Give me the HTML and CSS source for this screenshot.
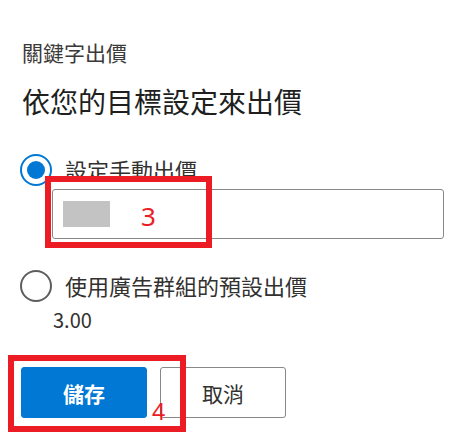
FILE: index.html
```html
<!DOCTYPE html>
<html lang="zh-Hant">
<head>
<meta charset="utf-8">
<title>關鍵字出價</title>
<link rel="stylesheet" href="styles.css">
</head>
<body>
<div class="panel">
    <div class="label">關鍵字出價</div>
    <h1 class="heading">依您的目標設定來出價</h1>

    <div class="option">
        <span class="radio radio-on"></span>
        <span class="option-text">設定手動出價</span>
    </div>
    <div class="field">
        <span class="redacted"></span>
    </div>

    <div class="option option2">
        <span class="radio"></span>
        <span class="option-text">使用廣告群組的預設出價</span>
    </div>
    <div class="amount">3.00</div>

    <div class="actions">
        <button class="button button-primary">儲存</button>
        <button class="button">取消</button>
    </div>

    <!-- annotation marks -->
    <div class="mark mark3"></div>
    <div class="mark-num num3">3</div>
    <div class="mark mark4"></div>
    <div class="mark-num num4">4</div>
</div>
</body>
</html>
```

FILE: styles.css
```css
html, body {
    margin: 0;
    background: #ffffff;
}
body {
    font-family: "Noto Sans CJK TC", "Noto Sans", sans-serif;
    color: #323130;
}
.panel {
    position: relative;
    padding: 37px 11px 0 20px;
    height: 407px;
}
.label {
    font-size: 21px;
    line-height: 30px;
    margin-left: 2px;
    color: #3b3a39;
}
.heading {
    font-size: 28px;
    font-weight: normal;
    line-height: 38px;
    margin: 15px 0 0 2px;
    color: #201f1e;
}
.option {
    display: flex;
    align-items: center;
    gap: 13px;
    margin-top: 34px;
    height: 32px;
}
.option2 {
    margin-top: 31px;
}
.option-text {
    font-size: 22px;
    line-height: 30px;
    margin-top: -3px;
}
.radio {
    box-sizing: border-box;
    width: 32px;
    height: 32px;
    border: 2px solid #605e5c;
    border-radius: 50%;
    display: flex;
    align-items: center;
    justify-content: center;
    flex: none;
}
.radio-on {
    border-color: #0078d4;
}
.radio-on::after {
    content: "";
    width: 18px;
    height: 18px;
    border-radius: 50%;
    background: #0078d4;
}
.field {
    box-sizing: border-box;
    margin: 3px 0 0 32px;
    height: 50px;
    border: 1px solid #8a8886;
    border-radius: 3px;
    display: flex;
    align-items: center;
    padding-left: 10px;
}
.redacted {
    width: 47px;
    height: 26px;
    background: #c3c3c3;
}
.amount {
    font-size: 20px;
    line-height: 26px;
    margin: 5px 0 0 33px;
}
.actions {
    display: flex;
    gap: 13px;
    margin-top: 34px;
    margin-left: 1px;
}
.button {
    box-sizing: border-box;
    width: 126px;
    height: 51px;
    border: 1px solid #8a8886;
    border-radius: 3px;
    background: #ffffff;
    color: #323130;
    font-family: inherit;
    font-size: 21px;
    font-weight: normal;
    padding: 0;
}
.button-primary {
    background: #0078d4;
    border-color: #0078d4;
    color: #ffffff;
    font-weight: bold;
}
.mark {
    position: absolute;
    border: 6px solid #ec1c24;
    box-sizing: border-box;
}
.mark3 {
    left: 45px;
    top: 176px;
    width: 167px;
    height: 72px;
}
.mark4 {
    left: 8px;
    top: 355px;
    width: 178px;
    height: 77px;
}
.mark-num {
    position: absolute;
    color: #ec1c24;
    font-family: "Noto Sans", sans-serif;
    line-height: 1;
}
.num3 {
    left: 141px;
    top: 203px;
    font-size: 26px;
}
.num4 {
    left: 152px;
    top: 400px;
    font-size: 23px;
}
```
